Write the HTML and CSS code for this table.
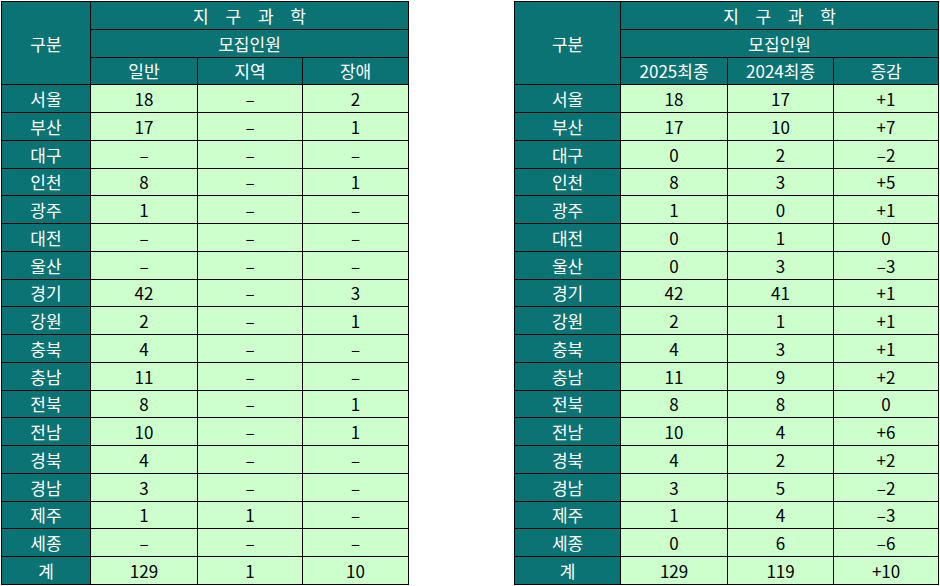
FILE: index.html
```html
<!DOCTYPE html>
<html lang="ko">
<head>
<meta charset="utf-8">
<link rel="stylesheet" href="styles.css">
</head>
<body>
<div class="page">
  <table class="grid grid-left">
    <colgroup>
      <col class="c-label-l"><col class="c-l1"><col class="c-l2"><col class="c-l3">
    </colgroup>
    <thead>
      <tr><th rowspan="3" class="hd">구분</th><th colspan="3" class="hd title">지 구 과 학</th></tr>
      <tr><th colspan="3" class="hd">모집인원</th></tr>
      <tr><th class="hd">일반</th><th class="hd">지역</th><th class="hd">장애</th></tr>
    </thead>
    <tbody>
      <tr><th class="hd">서울</th><td>18</td><td>–</td><td>2</td></tr>
      <tr><th class="hd">부산</th><td>17</td><td>–</td><td>1</td></tr>
      <tr><th class="hd">대구</th><td>–</td><td>–</td><td>–</td></tr>
      <tr><th class="hd">인천</th><td>8</td><td>–</td><td>1</td></tr>
      <tr><th class="hd">광주</th><td>1</td><td>–</td><td>–</td></tr>
      <tr><th class="hd">대전</th><td>–</td><td>–</td><td>–</td></tr>
      <tr><th class="hd">울산</th><td>–</td><td>–</td><td>–</td></tr>
      <tr><th class="hd">경기</th><td>42</td><td>–</td><td>3</td></tr>
      <tr><th class="hd">강원</th><td>2</td><td>–</td><td>1</td></tr>
      <tr><th class="hd">충북</th><td>4</td><td>–</td><td>–</td></tr>
      <tr><th class="hd">충남</th><td>11</td><td>–</td><td>–</td></tr>
      <tr><th class="hd">전북</th><td>8</td><td>–</td><td>1</td></tr>
      <tr><th class="hd">전남</th><td>10</td><td>–</td><td>1</td></tr>
      <tr><th class="hd">경북</th><td>4</td><td>–</td><td>–</td></tr>
      <tr><th class="hd">경남</th><td>3</td><td>–</td><td>–</td></tr>
      <tr><th class="hd">제주</th><td>1</td><td>1</td><td>–</td></tr>
      <tr><th class="hd">세종</th><td>–</td><td>–</td><td>–</td></tr>
      <tr><th class="hd">계</th><td>129</td><td>1</td><td>10</td></tr>
    </tbody>
  </table>

  <table class="grid grid-right">
    <colgroup>
      <col class="c-label-r"><col class="c-r1"><col class="c-r2"><col class="c-r3">
    </colgroup>
    <thead>
      <tr><th rowspan="3" class="hd">구분</th><th colspan="3" class="hd title">지 구 과 학</th></tr>
      <tr><th colspan="3" class="hd">모집인원</th></tr>
      <tr><th class="hd">2025최종</th><th class="hd">2024최종</th><th class="hd">증감</th></tr>
    </thead>
    <tbody>
      <tr><th class="hd">서울</th><td>18</td><td>17</td><td>+1</td></tr>
      <tr><th class="hd">부산</th><td>17</td><td>10</td><td>+7</td></tr>
      <tr><th class="hd">대구</th><td>0</td><td>2</td><td>–2</td></tr>
      <tr><th class="hd">인천</th><td>8</td><td>3</td><td>+5</td></tr>
      <tr><th class="hd">광주</th><td>1</td><td>0</td><td>+1</td></tr>
      <tr><th class="hd">대전</th><td>0</td><td>1</td><td>0</td></tr>
      <tr><th class="hd">울산</th><td>0</td><td>3</td><td>–3</td></tr>
      <tr><th class="hd">경기</th><td>42</td><td>41</td><td>+1</td></tr>
      <tr><th class="hd">강원</th><td>2</td><td>1</td><td>+1</td></tr>
      <tr><th class="hd">충북</th><td>4</td><td>3</td><td>+1</td></tr>
      <tr><th class="hd">충남</th><td>11</td><td>9</td><td>+2</td></tr>
      <tr><th class="hd">전북</th><td>8</td><td>8</td><td>0</td></tr>
      <tr><th class="hd">전남</th><td>10</td><td>4</td><td>+6</td></tr>
      <tr><th class="hd">경북</th><td>4</td><td>2</td><td>+2</td></tr>
      <tr><th class="hd">경남</th><td>3</td><td>5</td><td>–2</td></tr>
      <tr><th class="hd">제주</th><td>1</td><td>4</td><td>–3</td></tr>
      <tr><th class="hd">세종</th><td>0</td><td>6</td><td>–6</td></tr>
      <tr><th class="hd">계</th><td>129</td><td>119</td><td>+10</td></tr>
    </tbody>
  </table>
</div>
</body>
</html>
```

FILE: styles.css
```css
html, body {
  margin: 0;
  padding: 0;
  background: #ffffff;
}

.page {
  display: flex;
  align-items: flex-start;
  gap: 105px;
  padding: 1px 0 0 1px;
}

.grid {
  border-collapse: collapse;
  table-layout: fixed;
  font-family: "Noto Sans CJK KR", "Liberation Sans", sans-serif;
  font-size: 17px;
  line-height: 1;
  color: #000;
}

.grid-left { width: 408px; }
.grid-right { width: 424px; }

.c-label-l { width: 89px; }
.c-l1 { width: 107px; }
.c-l2 { width: 105px; }
.c-l3 { width: 106px; }

.c-label-r { width: 106px; }
.c-r1 { width: 107px; }
.c-r2 { width: 106px; }
.c-r3 { width: 105px; }

.grid tr { height: 27.76px; }

.grid th,
.grid td {
  border: 1px solid #000;
  padding: 0;
  text-align: center;
  vertical-align: middle;
  font-weight: normal;
}

.grid td {
  background: #ccffcc;
}

.grid .hd {
  background: #0b7373;
  color: #ffffff;
}

.grid .title {
  letter-spacing: 6px;
  padding-left: 6px;
}
```
